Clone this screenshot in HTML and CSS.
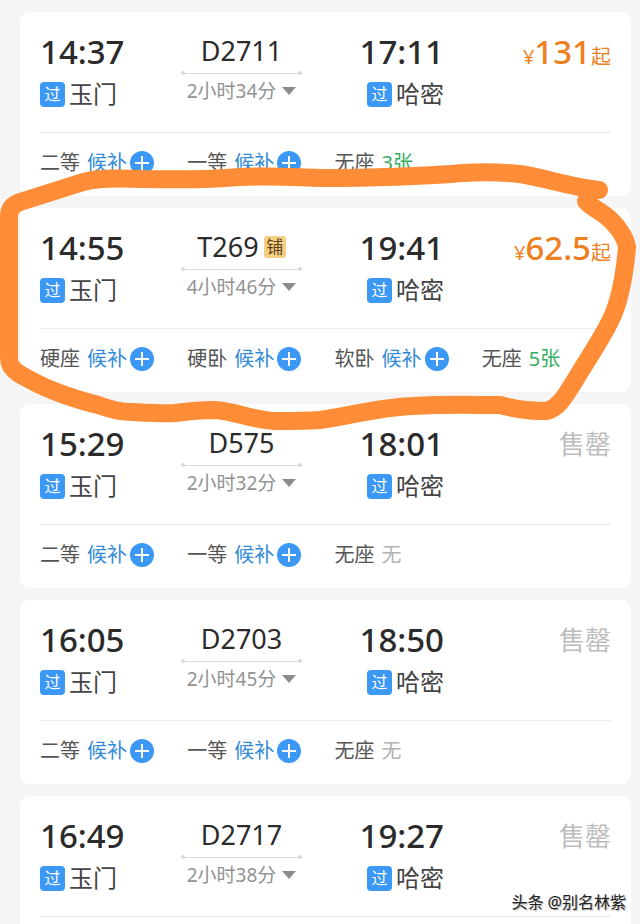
FILE: index.html
```html
<!DOCTYPE html>
<html lang="zh-CN">
<head>
<meta charset="utf-8">
<meta name="viewport" content="width=device-width, initial-scale=1">
<title>玉门 - 哈密</title>
<link rel="stylesheet" href="styles.css">
</head>
<body>
<main class="list">
  <article class="card">
    <div class="trip">
      <div class="stop"><time class="clock">14:37</time><span class="station"><span class="pass">过</span>玉门</span></div>
      <div class="train"><span class="number">D2711</span><span class="track"></span><button class="duration" type="button">2小时34分<span class="caret"></span></button></div>
      <div class="stop arrive"><time class="clock">17:11</time><span class="station"><span class="pass">过</span>哈密</span></div>
      <div class="price"><small>¥</small><b>131</b><small>起</small></div>
    </div>
    <div class="seats">
      <div class="seat">二等 <button class="wait" type="button">候补<svg class="plus" viewBox="0 0 24 24"><circle cx="12" cy="12" r="12"/><path d="M12 5v14M5 12h14"/></svg></button></div>
      <div class="seat">一等 <button class="wait" type="button">候补<svg class="plus" viewBox="0 0 24 24"><circle cx="12" cy="12" r="12"/><path d="M12 5v14M5 12h14"/></svg></button></div>
      <div class="seat">无座 <span class="left">3张</span></div>
    </div>
  </article>

  <article class="card">
    <div class="trip">
      <div class="stop"><time class="clock">14:55</time><span class="station"><span class="pass">过</span>玉门</span></div>
      <div class="train"><span class="number">T269<span class="berth">铺</span></span><span class="track"></span><button class="duration" type="button">4小时46分<span class="caret"></span></button></div>
      <div class="stop arrive"><time class="clock">19:41</time><span class="station"><span class="pass">过</span>哈密</span></div>
      <div class="price"><small>¥</small><b>62.5</b><small>起</small></div>
    </div>
    <div class="seats">
      <div class="seat">硬座 <button class="wait" type="button">候补<svg class="plus" viewBox="0 0 24 24"><circle cx="12" cy="12" r="12"/><path d="M12 5v14M5 12h14"/></svg></button></div>
      <div class="seat">硬卧 <button class="wait" type="button">候补<svg class="plus" viewBox="0 0 24 24"><circle cx="12" cy="12" r="12"/><path d="M12 5v14M5 12h14"/></svg></button></div>
      <div class="seat">软卧 <button class="wait" type="button">候补<svg class="plus" viewBox="0 0 24 24"><circle cx="12" cy="12" r="12"/><path d="M12 5v14M5 12h14"/></svg></button></div>
      <div class="seat">无座 <span class="left">5张</span></div>
    </div>
  </article>

  <article class="card">
    <div class="trip">
      <div class="stop"><time class="clock">15:29</time><span class="station"><span class="pass">过</span>玉门</span></div>
      <div class="train"><span class="number">D575</span><span class="track"></span><button class="duration" type="button">2小时32分<span class="caret"></span></button></div>
      <div class="stop arrive"><time class="clock">18:01</time><span class="station"><span class="pass">过</span>哈密</span></div>
      <div class="price soldout">售罄</div>
    </div>
    <div class="seats">
      <div class="seat">二等 <button class="wait" type="button">候补<svg class="plus" viewBox="0 0 24 24"><circle cx="12" cy="12" r="12"/><path d="M12 5v14M5 12h14"/></svg></button></div>
      <div class="seat">一等 <button class="wait" type="button">候补<svg class="plus" viewBox="0 0 24 24"><circle cx="12" cy="12" r="12"/><path d="M12 5v14M5 12h14"/></svg></button></div>
      <div class="seat">无座 <span class="none">无</span></div>
    </div>
  </article>

  <article class="card">
    <div class="trip">
      <div class="stop"><time class="clock">16:05</time><span class="station"><span class="pass">过</span>玉门</span></div>
      <div class="train"><span class="number">D2703</span><span class="track"></span><button class="duration" type="button">2小时45分<span class="caret"></span></button></div>
      <div class="stop arrive"><time class="clock">18:50</time><span class="station"><span class="pass">过</span>哈密</span></div>
      <div class="price soldout">售罄</div>
    </div>
    <div class="seats">
      <div class="seat">二等 <button class="wait" type="button">候补<svg class="plus" viewBox="0 0 24 24"><circle cx="12" cy="12" r="12"/><path d="M12 5v14M5 12h14"/></svg></button></div>
      <div class="seat">一等 <button class="wait" type="button">候补<svg class="plus" viewBox="0 0 24 24"><circle cx="12" cy="12" r="12"/><path d="M12 5v14M5 12h14"/></svg></button></div>
      <div class="seat">无座 <span class="none">无</span></div>
    </div>
  </article>

  <article class="card">
    <div class="trip">
      <div class="stop"><time class="clock">16:49</time><span class="station"><span class="pass">过</span>玉门</span></div>
      <div class="train"><span class="number">D2717</span><span class="track"></span><button class="duration" type="button">2小时38分<span class="caret"></span></button></div>
      <div class="stop arrive"><time class="clock">19:27</time><span class="station"><span class="pass">过</span>哈密</span></div>
      <div class="price soldout">售罄</div>
    </div>
  </article>
</main>

<svg class="marker" viewBox="0 0 640 924" aria-hidden="true">
  <path d="M599 190C570 187 545 178 520 174C500 172 480 172 463 173C425 176 380 178 320 178C285 176 250 176 225 178C200 180 170 179 140 179C115 178 95 178 80 183L20 202Q9 206 9 216V358Q9 367 18 373C42 388 70 398 98 405C116 411 122 412 132 412C150 413 165 414 175 413C190 411 202 410 215 410C235 411 252 420 275 421C290 421 305 421 320 420C350 416 380 407 413 406C445 404 475 405 500 405C515 409 530 411 547 411C560 407 566 394 574 382C586 361 603 338 613 315C621 296 625 270 627 247C625 235 614 222 606 216C598 209 590 207 586 201"/>
</svg>
<div class="credit">头条 @别名林紫</div>
</body>
</html>
```
FILE: styles.css
```css
* { box-sizing: border-box; }

body {
  position: relative;
  height: 100vh;
  margin: 0;
  overflow: hidden;
  background: #f5f5f5;
  color: #2b2b2b;
  font-family: "Noto Sans", "Noto Sans CJK SC", sans-serif;
}

button {
  padding: 0;
  border: 0;
  background: none;
  font: inherit;
  color: inherit;
}

.list {
  display: flex;
  flex-direction: column;
  gap: 12px;
  min-height: 100vh;
  padding: 12px 9px 0 20px;
}

.card {
  flex: none;
  padding: 0 20px;
  border-radius: 10px;
  background: #fff;
}

.card:last-child {
  flex: 1 0 auto;
  border-radius: 10px 10px 0 0;
}

.trip {
  display: grid;
  grid-template-columns: 141fr 121fr 142fr 167fr;
  height: 121px;
  padding-top: 20px;
  border-bottom: 1px solid #ececec;
}

.stop {
  display: flex;
  flex-direction: column;
  align-items: flex-start;
}

.arrive { align-items: flex-end; }

.clock {
  font-size: 33px;
  font-weight: 500;
  line-height: 40px;
}

.station {
  display: flex;
  align-items: center;
  gap: 4px;
  margin-top: 9px;
  color: #444;
  font-size: 24px;
  line-height: 26px;
}

.pass {
  width: 25px;
  height: 25px;
  border-radius: 4px;
  background: #3c98f5;
  color: #fff;
  font-size: 16px;
  line-height: 25px;
  text-align: center;
}

.train {
  display: flex;
  flex-direction: column;
  align-items: center;
}

.number {
  display: flex;
  align-items: center;
  gap: 5px;
  font-size: 27px;
  line-height: 38px;
}

.berth {
  width: 22px;
  height: 22px;
  border-radius: 3px;
  background: #f5d083;
  color: #5c4018;
  font-size: 17px;
  line-height: 22px;
  text-align: center;
}

.track {
  display: flex;
  align-items: center;
  justify-content: space-between;
  align-self: stretch;
  height: 4px;
  margin-top: 1px;
  background: linear-gradient(#dedede, #dedede) center / 100% 1px no-repeat;
}

.track::before,
.track::after {
  content: "";
  width: 4px;
  height: 4px;
  border-radius: 2px;
  background: #dadada;
}

.duration {
  display: flex;
  align-items: center;
  gap: 6px;
  margin-top: 2px;
  color: #929292;
  font-size: 19px;
  line-height: 28px;
}

.caret {
  border: 7px solid transparent;
  border-top: 8px solid #8c8c8c;
  border-bottom: 0;
}

.price {
  display: flex;
  align-items: baseline;
  justify-content: flex-end;
  color: #ed8021;
  line-height: 40px;
}

.price b {
  font-size: 33px;
  font-weight: 500;
}

.price small { font-size: 20px; }

.price.soldout {
  color: #bdbdbd;
  font-size: 26px;
}

.seats {
  display: grid;
  grid-template-columns: repeat(4, 1fr);
  gap: 18px;
  height: 63px;
  padding-top: 15px;
}

.seat {
  display: flex;
  gap: 7px;
  color: #555;
  font-size: 20px;
  line-height: 30px;
  white-space: nowrap;
}

.wait {
  display: flex;
  align-items: center;
  gap: 3px;
  height: 30px;
  color: #338bd8;
}

.plus {
  width: 24px;
  height: 24px;
}

.plus circle { fill: #3c98f5; }

.plus path {
  fill: none;
  stroke: #fff;
  stroke-width: 2;
}

.left { color: #36ae61; }

.none { color: #b3b3b3; }

.marker {
  position: absolute;
  top: 0;
  left: 0;
  width: 100%;
  pointer-events: none;
}

.marker path {
  fill: none;
  stroke: #ff8c36;
  stroke-width: 18;
  stroke-linecap: round;
  stroke-linejoin: round;
}

.credit {
  position: absolute;
  right: 14px;
  bottom: 10px;
  color: #222;
  font-size: 16px;
  line-height: 24px;
  text-shadow: -1px -1px 0 #fff, 1px 1px 1px #999;
}
```
